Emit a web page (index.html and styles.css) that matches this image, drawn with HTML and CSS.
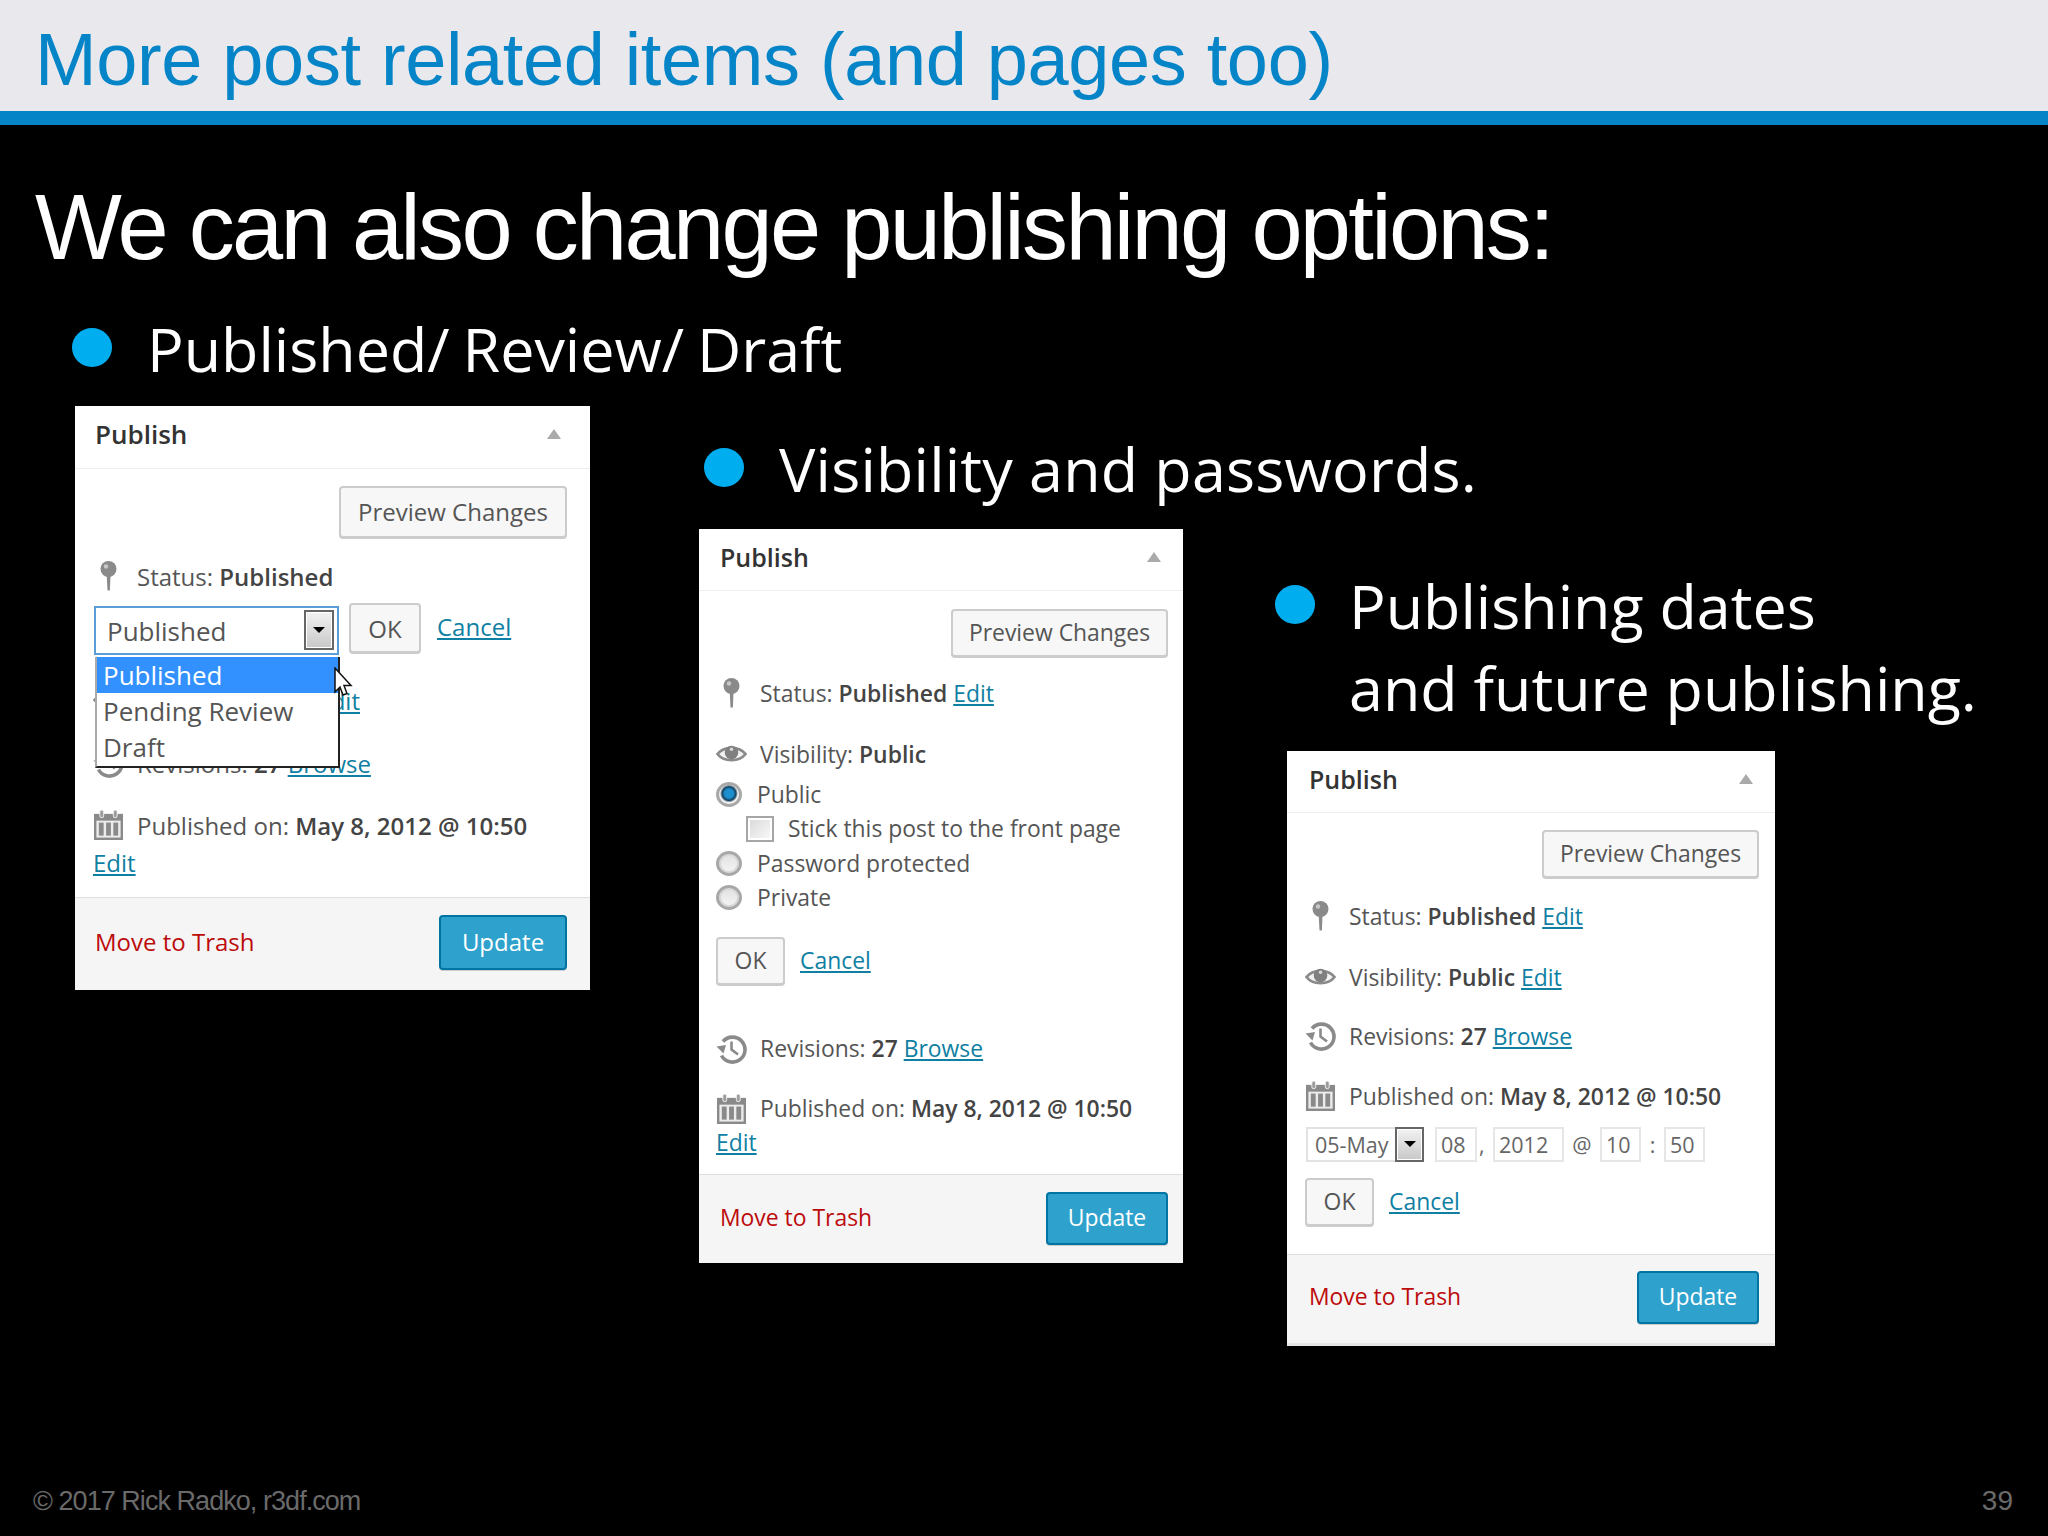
FILE: index.html
```html
<!DOCTYPE html>
<html>
<head>
    <title>More post related items (and pages too)</title>
    <meta charset="utf-8">
    <link rel="stylesheet" href="styles.css">
</head>
<body>
    <svg class="defs" width="0" height="0">
        <symbol id="pin" viewBox="0 0 20 30">
            <path d="M8.200 14h3.800l-.6 15.500h-2.400z" fill="#8a8a8a"/>
            <circle cx="10" cy="8" r="8" fill="#8a8a8a"/>
            <circle cx="7.500" cy="5.500" r="2.200" fill="#c8c8c8"/>
        </symbol>
        <symbol id="eye" viewBox="0 0 32 20">
            <path d="M1.500 10C8 1.500 24 1.500 30.500 10 24 18.500 8 18.500 1.500 10z" fill="#f2f2f2" stroke="#8a8a8a" stroke-width="2.800"/>
            <circle cx="16" cy="8.500" r="7" fill="#808080"/>
            <circle cx="16" cy="5" r="1.800" fill="#d8d8d8"/>
        </symbol>
        <symbol id="clock" viewBox="0 0 30 30">
            <path d="M6.500 7.500A12.500 12.500 0 1 1 5 21.500" fill="none" stroke="#8a8a8a" stroke-width="3.600"/>
            <path d="M0 12.500l9.500-1.500-2.500 8.500z" fill="#8a8a8a"/>
            <path d="M15 7.500v8l6.500 5" fill="none" stroke="#8a8a8a" stroke-width="2.600"/>
        </symbol>
        <symbol id="calendar" viewBox="0 0 30 31">
            <rect x="0" y="4" width="30" height="27" fill="#8a8a8a"/>
            <rect x="2.500" y="11" width="25" height="17.500" fill="#ececec"/>
            <rect x="5" y="13" width="5" height="13.500" fill="#8a8a8a"/>
            <rect x="12.500" y="13" width="5" height="13.500" fill="#8a8a8a"/>
            <rect x="20" y="13" width="5" height="13.500" fill="#8a8a8a"/>
            <rect x="6" y="0" width="4" height="8" rx="2" fill="#9c9c9c" stroke="#f2f2f2"/>
            <rect x="20" y="0" width="4" height="8" rx="2" fill="#9c9c9c" stroke="#f2f2f2"/>
        </symbol>
    </svg>

    <header class="title-bar">
        <h1>More post related items (and pages too)</h1>
    </header>

    <main class="slide">
        <h2>We can also change publishing options:</h2>
        <div class="bullet bullet-first">
            <span class="dot"></span>
            <p>Published/ Review/ Draft</p>
        </div>

        <div class="columns">
            <section class="col col-a">
                <div class="panel panel-a">
                    <div class="panel-head"><span>Publish</span><i class="arrow-up"></i></div>
                    <div class="panel-body">
                        <div class="actions"><button class="btn preview">Preview Changes</button></div>
                        <div class="row status">
                            <svg class="ico"><use href="#pin"/></svg>
                            <span>Status: <b>Published</b></span>
                        </div>
                        <div class="row edit-row">
                            <div class="select status-select">
                                <span>Published</span>
                                <i class="drop"></i>
                                <ul class="dropdown">
                                    <li class="picked">Published</li>
                                    <li>Pending Review</li>
                                    <li>Draft</li>
                                </ul>
                                <svg class="cursor" viewBox="0 0 18 30" width="20" height="30">
                                    <path d="M1 1v24l5-5 3 8 4-1.500-3-8h7z" fill="#fff" stroke="#111" stroke-width="1.500"/>
                                </svg>
                            </div>
                            <button class="btn ok">OK</button>
                            <a class="link cancel" href="#">Cancel</a>
                        </div>
                        <div class="row visibility">
                            <svg class="ico"><use href="#eye"/></svg>
                            <span>Visibility: <b>Public</b> <a class="link" href="#">Edit</a></span>
                        </div>
                        <div class="row revisions">
                            <svg class="ico"><use href="#clock"/></svg>
                            <span>Revisions: <b>27</b> <a class="link" href="#">Browse</a></span>
                        </div>
                        <div class="row published">
                            <svg class="ico"><use href="#calendar"/></svg>
                            <span>Published on: <b>May 8, 2012 @ 10:50</b></span>
                        </div>
                        <div class="row edit-link"><a class="link" href="#">Edit</a></div>
                    </div>
                    <div class="panel-foot">
                        <a class="trash" href="#">Move to Trash</a>
                        <button class="btn update">Update</button>
                    </div>
                </div>
            </section>

            <section class="col col-b">
                <div class="bullet">
                    <span class="dot"></span>
                    <p>Visibility and passwords.</p>
                </div>
                <div class="panel panel-b">
                    <div class="panel-head"><span>Publish</span><i class="arrow-up"></i></div>
                    <div class="panel-body">
                        <div class="actions"><button class="btn preview">Preview Changes</button></div>
                        <div class="row status">
                            <svg class="ico"><use href="#pin"/></svg>
                            <span>Status: <b>Published</b> <a class="link" href="#">Edit</a></span>
                        </div>
                        <div class="row visibility">
                            <svg class="ico"><use href="#eye"/></svg>
                            <span>Visibility: <b>Public</b></span>
                        </div>
                        <div class="choice first"><i class="radio on"></i><span>Public</span></div>
                        <div class="choice sticky"><i class="check"></i><span>Stick this post to the front page</span></div>
                        <div class="choice"><i class="radio"></i><span>Password protected</span></div>
                        <div class="choice"><i class="radio"></i><span>Private</span></div>
                        <div class="row edit-row">
                            <button class="btn ok">OK</button>
                            <a class="link cancel" href="#">Cancel</a>
                        </div>
                        <div class="row revisions">
                            <svg class="ico"><use href="#clock"/></svg>
                            <span>Revisions: <b>27</b> <a class="link" href="#">Browse</a></span>
                        </div>
                        <div class="row published">
                            <svg class="ico"><use href="#calendar"/></svg>
                            <span>Published on: <b>May 8, 2012 @ 10:50</b></span>
                        </div>
                        <div class="row edit-link"><a class="link" href="#">Edit</a></div>
                    </div>
                    <div class="panel-foot">
                        <a class="trash" href="#">Move to Trash</a>
                        <button class="btn update">Update</button>
                    </div>
                </div>
            </section>

            <section class="col col-c">
                <div class="bullet">
                    <span class="dot"></span>
                    <p>Publishing dates<br>and future publishing.</p>
                </div>
                <div class="panel panel-c">
                    <div class="panel-head"><span>Publish</span><i class="arrow-up"></i></div>
                    <div class="panel-body">
                        <div class="actions"><button class="btn preview">Preview Changes</button></div>
                        <div class="row status">
                            <svg class="ico"><use href="#pin"/></svg>
                            <span>Status: <b>Published</b> <a class="link" href="#">Edit</a></span>
                        </div>
                        <div class="row visibility">
                            <svg class="ico"><use href="#eye"/></svg>
                            <span>Visibility: <b>Public</b> <a class="link" href="#">Edit</a></span>
                        </div>
                        <div class="row revisions">
                            <svg class="ico"><use href="#clock"/></svg>
                            <span>Revisions: <b>27</b> <a class="link" href="#">Browse</a></span>
                        </div>
                        <div class="row published">
                            <svg class="ico"><use href="#calendar"/></svg>
                            <span>Published on: <b>May 8, 2012 @ 10:50</b></span>
                        </div>
                        <div class="date-row">
                            <div class="select month-select"><span>05-May</span><i class="drop"></i></div>
                            <span class="field day">08</span>
                            <span class="sep comma">,</span>
                            <span class="field year">2012</span>
                            <span class="sep at">@</span>
                            <span class="field hour">10</span>
                            <span class="sep colon">:</span>
                            <span class="field minute">50</span>
                        </div>
                        <div class="row edit-row">
                            <button class="btn ok">OK</button>
                            <a class="link cancel" href="#">Cancel</a>
                        </div>
                    </div>
                    <div class="panel-foot">
                        <a class="trash" href="#">Move to Trash</a>
                        <button class="btn update">Update</button>
                    </div>
                </div>
            </section>
        </div>
    </main>

    <footer class="slide-foot">
        <span class="copy">© 2017 Rick Radko, r3df.com</span>
        <span class="page-no">39</span>
    </footer>
</body>
</html>
```

FILE: styles.css
```css
* {
    box-sizing: border-box;
    margin: 0;
    padding: 0;
}

body {
    width: 2048px;
    height: 1536px;
    overflow: hidden;
    display: flex;
    flex-direction: column;
    background: #000;
    font-family: "Liberation Sans", Arial, sans-serif;
}

.defs {
    position: absolute;
}

.title-bar {
    height: 125px;
    padding: 9px 0 0 35px;
    background: #e9e9ed;
    border-bottom: 14px solid #0585c8;
}

h1 {
    font-size: 74px;
    font-weight: normal;
    line-height: 102px;
    letter-spacing: -0.370px;
    color: #0585c8;
    white-space: nowrap;
}

.slide {
    flex: 1;
    padding-left: 35px;
}

h2 {
    margin-top: 52px;
    font-size: 92px;
    font-weight: normal;
    line-height: 100px;
    letter-spacing: -2.700px;
    color: #fff;
    white-space: nowrap;
}

.bullet {
    display: flex;
    gap: 34px;
    font-family: "Open Sans", sans-serif;
    font-size: 61px;
    line-height: 82px;
    color: #fff;
    white-space: nowrap;
}

.bullet-first {
    gap: 35px;
    margin: 31px 0 0 37px;
    word-spacing: -3px;
}

.dot {
    flex: none;
    width: 40px;
    height: 39px;
    margin-top: 20px;
    border-radius: 50%;
    background: #00adef;
}

.columns {
    display: flex;
    margin-top: 16px;
    margin-left: 40px;
}

.col-a {
    width: 515px;
    margin-right: 109px;
}

.col-b {
    width: 484px;
    margin-right: 92px;
}

.col-b .bullet {
    gap: 35px;
    margin: 22px 0 19px 5px;
    letter-spacing: 0.200px;
}

.col-c .bullet {
    margin: 159px 0 22px;
}

/* wordpress publish box */
.panel {
    display: flex;
    flex-direction: column;
    background: #fff;
    font-family: "Open Sans", sans-serif;
    font-size: 22.900px;
    color: #555;
    white-space: nowrap;
}

.panel b {
    color: #444;
    font-weight: 600;
}

.panel-a {
    width: 515px;
    height: 584px;
    font-size: 24px;
}

.panel-b {
    width: 484px;
    height: 734px;
}

.panel-c {
    width: 488px;
    height: 595px;
    margin-left: 12px;
    border-bottom: 3px solid #e6e6e6;
}

.panel-head {
    display: flex;
    align-items: center;
    justify-content: space-between;
    height: 62px;
    padding: 0 22px 5px 21px;
    border-bottom: 1px solid #eee;
    font-size: 25px;
    font-weight: 600;
    color: #333;
}

.panel-a .panel-head {
    height: 63px;
    padding: 0 29px 6px 20px;
    font-size: 26px;
}

.panel-c .panel-head {
    padding: 0 22px 5px 22px;
}

.arrow-up {
    width: 0;
    height: 0;
    border: 7.500px solid transparent;
    border-top: 0;
    border-bottom: 10px solid #aaa;
}

.panel-body {
    flex: 1;
    padding: 0 15px 0 17px;
}

.panel-a .panel-body {
    padding: 0 23px 0 18px;
}

.panel-c .panel-body {
    padding: 0 16px 0 18px;
}

.actions {
    display: flex;
    justify-content: flex-end;
    margin-top: 18px;
}

.panel-a .actions,
.panel-c .actions {
    margin-top: 17px;
}

.btn {
    font: inherit;
    color: #555;
    background: #f7f7f7;
    border: 2px solid #ccc;
    border-radius: 4px;
    box-shadow: 0 1px 0 #ccc;
}

.preview {
    width: 217px;
    height: 48px;
    padding-bottom: 1px;
}

.panel-a .preview {
    width: 228px;
    height: 52px;
}

.ok {
    width: 69px;
    height: 48px;
}

.panel-a .ok {
    width: 72px;
    height: 50px;
    margin: 0 16px 2px 10px;
}

.update {
    width: 122px;
    height: 53px;
    padding-bottom: 2px;
    color: #fff;
    background: #2ea2cc;
    border-color: #0074a2;
}

.panel-a .update {
    width: 128px;
    height: 55px;
}

.link {
    color: #0f7fa3;
    text-decoration: underline;
}

.row {
    display: flex;
    align-items: center;
    height: 34px;
}

.ico {
    flex: none;
    width: 31px;
    height: 30px;
    margin-right: 13px;
}

.status {
    margin-top: 20px;
}

.visibility,
.revisions,
.published {
    margin-top: 26px;
}

.edit-row {
    height: 48px;
    margin-top: 16px;
}

.cancel {
    margin-left: 15px;
}

.edit-link {
    margin-top: 0;
}

.panel-a .status {
    margin-top: 21px;
}

.panel-a .edit-row {
    height: 52px;
    margin-top: 10px;
    align-items: flex-start;
}

.panel-a .edit-row .cancel {
    margin: 7px 0 0;
}

.panel-a .visibility {
    margin-top: 28px;
}

.panel-a .revisions {
    margin-top: 29px;
}

.panel-a .published {
    margin-top: 28px;
}

.panel-a .edit-link {
    margin-top: 3px;
}

.panel-b .status {
    margin-top: 19px;
}

.panel-b .visibility {
    margin-top: 27px;
}

.panel-b .edit-row {
    margin-top: 25px;
}

.panel-b .revisions {
    margin-top: 47px;
}

.panel-c .status {
    margin-top: 21px;
}

.panel-c .visibility {
    margin-top: 27px;
}

.panel-c .revisions {
    margin-top: 25px;
}

.panel-c .edit-row {
    height: 47px;
}

.choice {
    display: flex;
    align-items: center;
    height: 28px;
    margin-top: 6.500px;
}

.choice.first {
    margin-top: 9px;
}

.choice.sticky {
    padding-left: 30px;
}

.radio {
    flex: none;
    width: 26px;
    height: 25px;
    margin-right: 15px;
    border: 3px solid #a8a8a8;
    border-radius: 50%;
    background: linear-gradient(#e2e2e2, #f4f4f4);
    box-shadow: inset 0 0 0 2px #d8d8d8;
}

.radio.on {
    background: radial-gradient(circle at 50% 45%, #1b8fd0 0 30%, #17405c 48%, #f2f2f2 62%);
    box-shadow: none;
}

.check {
    flex: none;
    width: 28px;
    height: 26px;
    margin-right: 14px;
    border: 2px solid #a6a6a6;
    background: linear-gradient(135deg, #d8d8d8, #fafafa);
    box-shadow: inset 0 0 0 2px #fff;
}

.select {
    position: relative;
    display: flex;
    align-items: center;
    background: #fff;
}

.status-select {
    flex: none;
    width: 245px;
    height: 49px;
    margin: 3px 0 0 1px;
    padding-left: 11px;
    border: 2px solid #5b9dd9;
    font-size: 26px;
}

.month-select {
    flex: none;
    width: 118px;
    height: 35px;
    padding-left: 7px;
    border: 2px solid #e2e2e2;
}

.drop {
    position: absolute;
    top: 2px;
    right: 3px;
    width: 30px;
    height: 40px;
    border: 2px solid #666;
    background: linear-gradient(#f2f2f2, #c8c8c8);
    box-shadow: inset 0 0 0 1px #fff;
}

.drop::after {
    content: "";
    position: absolute;
    top: 15px;
    left: 7px;
    border: 6px solid transparent;
    border-bottom: 0;
    border-top: 6px solid #000;
}

.month-select .drop {
    top: -2px;
    right: -2px;
    width: 29px;
    height: 35px;
}

.month-select .drop::after {
    top: 12px;
}

.dropdown {
    position: absolute;
    top: 49px;
    left: -1px;
    z-index: 2;
    width: 245px;
    height: 111px;
    list-style: none;
    background: #fff;
    border-left: 2px solid #aaa;
    border-right: 2px solid #222;
    border-bottom: 2px solid #222;
    font-size: 26px;
    line-height: 36px;
}

.dropdown li {
    padding-left: 6px;
}

.dropdown .picked {
    color: #fff;
    background: #3390ff;
}

.cursor {
    position: absolute;
    top: 59px;
    left: 237px;
    z-index: 3;
}

.date-row {
    display: flex;
    align-items: center;
    height: 35px;
    margin-top: 14px;
    margin-left: 1px;
    font-size: 21.500px;
    color: #666;
}

.field {
    display: flex;
    align-items: center;
    height: 35px;
    padding-left: 4px;
    border: 2px solid #e6e6e6;
}

.day {
    width: 42px;
    margin-left: 11px;
}

.year {
    width: 71px;
}

.hour,
.minute {
    width: 41px;
}

.comma {
    width: 16px;
    padding-left: 2px;
}

.at {
    width: 36px;
    text-align: center;
}

.colon {
    width: 23px;
    text-align: center;
}

.panel-foot {
    display: flex;
    align-items: center;
    justify-content: space-between;
    height: 89px;
    padding: 0 15px 2px 21px;
    background: #f5f5f5;
    border-top: 1px solid #dfdfdf;
}

.panel-a .panel-foot {
    height: 93px;
    padding: 0 23px 4px 20px;
}

.panel-c .panel-foot {
    height: 89px;
    padding: 0 16px 3px 22px;
}

.trash {
    margin-bottom: 2px;
    color: #bc0b0b;
    text-decoration: none;
}

.slide-foot {
    display: flex;
    align-items: center;
    justify-content: space-between;
    height: 70px;
    padding: 0 35px 0 33px;
    font-size: 27px;
    color: #6a6a6a;
}

.copy {
    letter-spacing: -0.950px;
}

.page-no {
    font-size: 28px;
}
```
